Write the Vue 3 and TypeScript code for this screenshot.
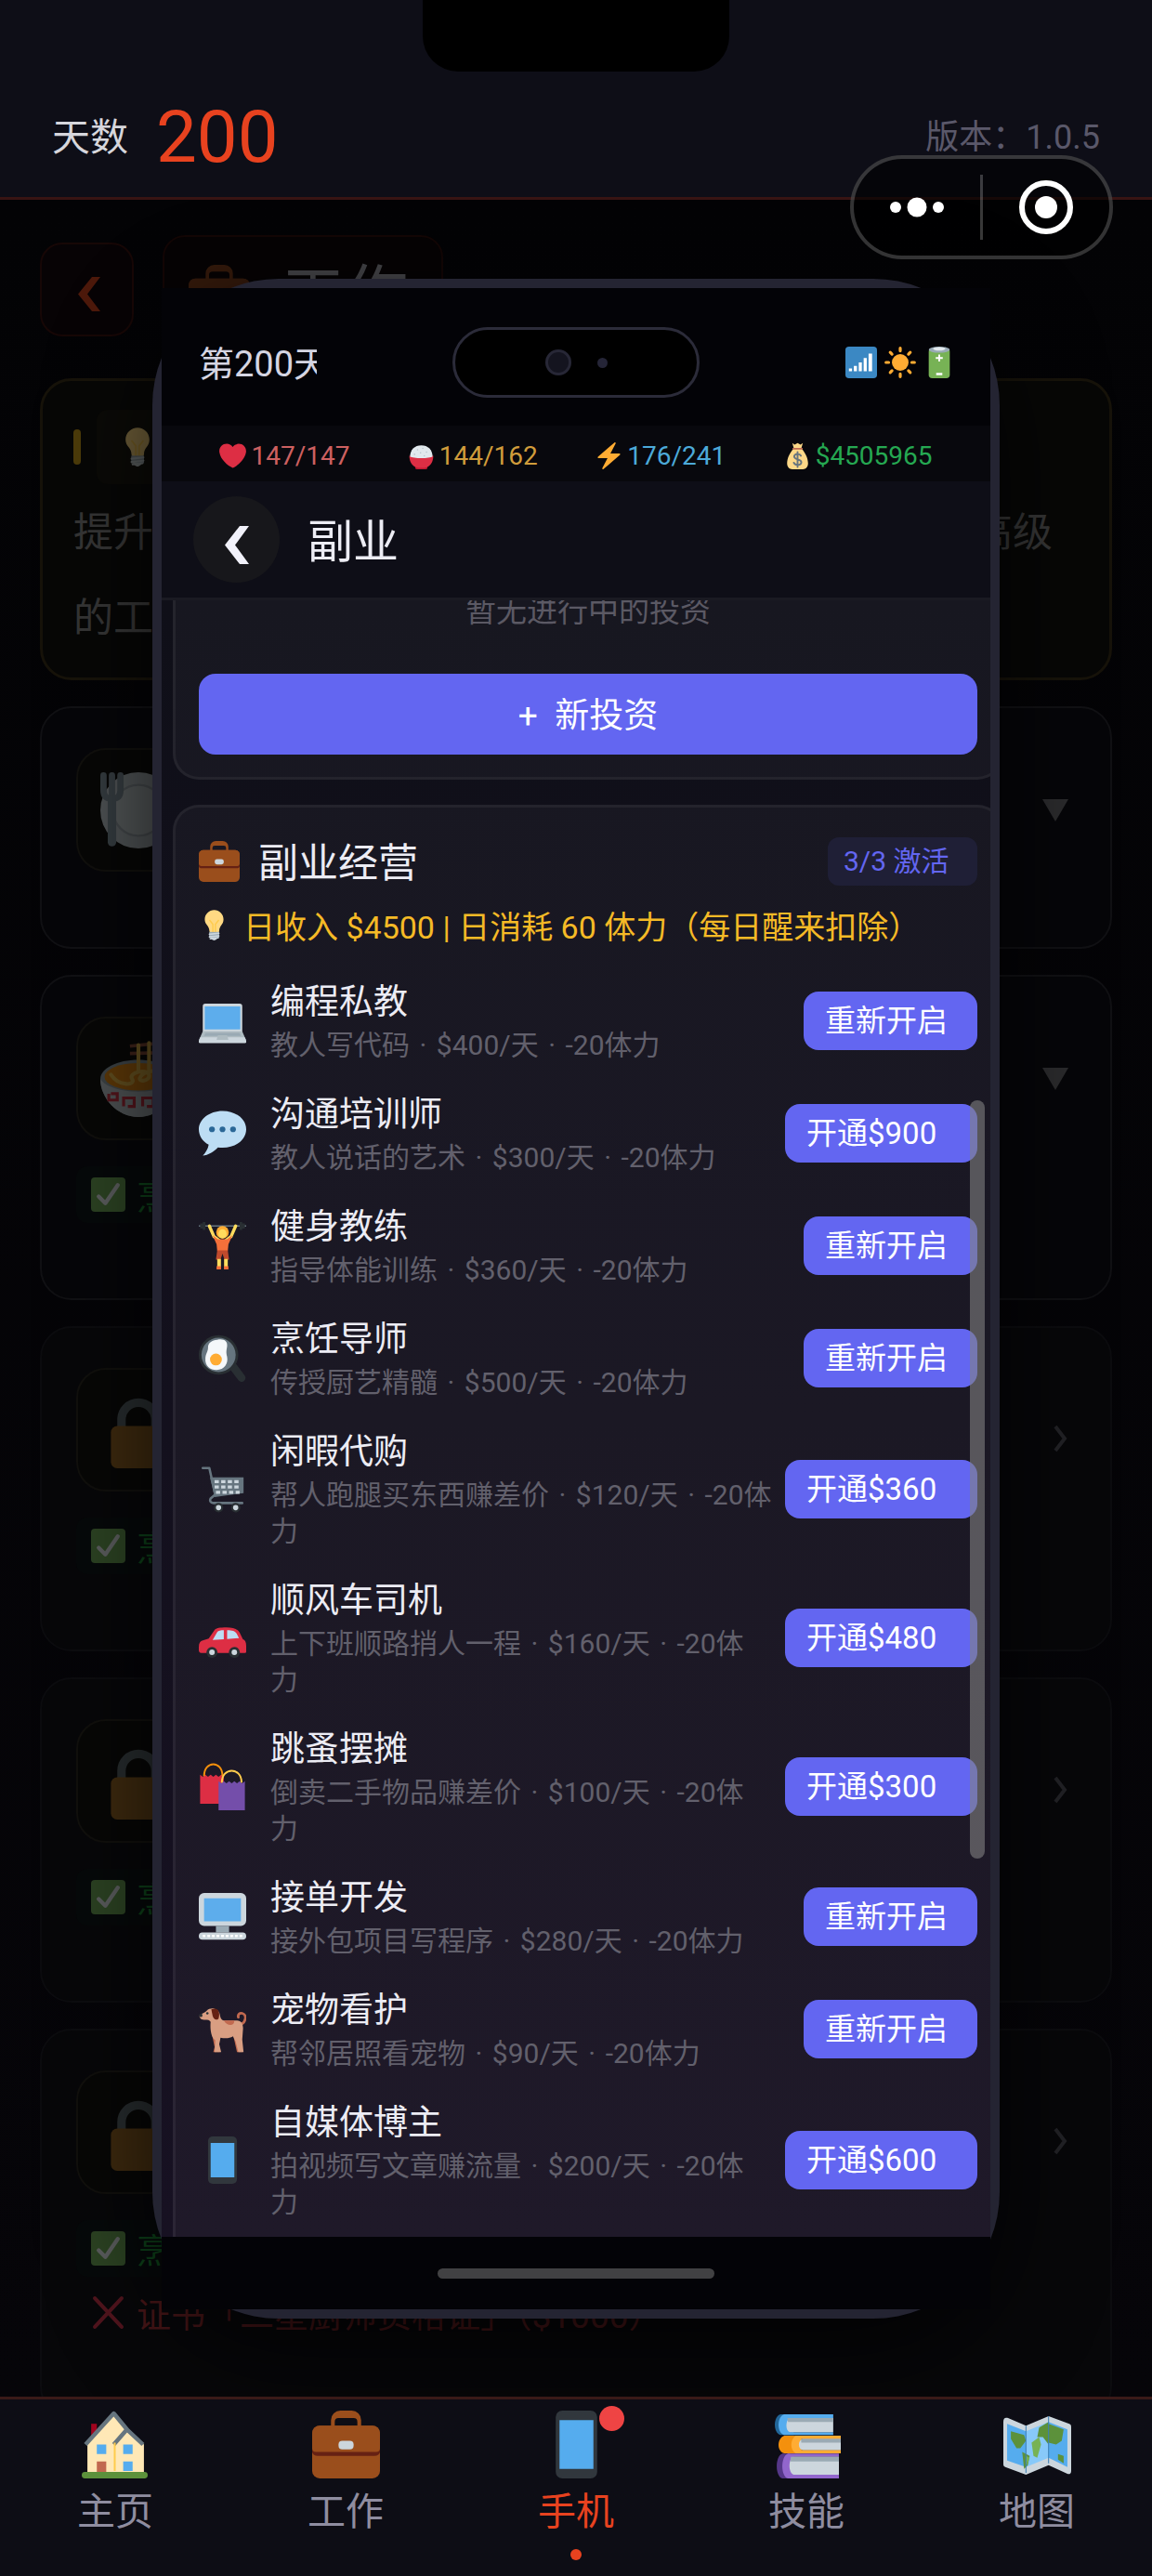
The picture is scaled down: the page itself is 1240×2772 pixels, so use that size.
<script setup lang="ts">
import { ref } from 'vue'

interface Gig {
  icon: string
  name: string
  desc: string[]
  action: string
  price?: boolean
}
interface Requirement {
  met: boolean
  text: string
}
interface Job {
  icon: string
  locked: boolean
  requirements: Requirement[]
}

const gigs: Gig[] = [
  { icon: 'laptop', name: '编程私教', desc: ['教人写代码', '$400/天', '-20体力'], action: '重新开启' },
  { icon: 'speech', name: '沟通培训师', desc: ['教人说话的艺术', '$300/天', '-20体力'], action: '开通$900', price: true },
  { icon: 'lifter', name: '健身教练', desc: ['指导体能训练', '$360/天', '-20体力'], action: '重新开启' },
  { icon: 'pan', name: '烹饪导师', desc: ['传授厨艺精髓', '$500/天', '-20体力'], action: '重新开启' },
  { icon: 'cart', name: '闲暇代购', desc: ['帮人跑腿买东西赚差价', '$120/天', '-20体\n力'], action: '开通$360', price: true },
  { icon: 'car', name: '顺风车司机', desc: ['上下班顺路捎人一程', '$160/天', '-20体\n力'], action: '开通$480', price: true },
  { icon: 'bags', name: '跳蚤摆摊', desc: ['倒卖二手物品赚差价', '$100/天', '-20体\n力'], action: '开通$300', price: true },
  { icon: 'desktop', name: '接单开发', desc: ['接外包项目写程序', '$280/天', '-20体力'], action: '重新开启' },
  { icon: 'dog', name: '宠物看护', desc: ['帮邻居照看宠物', '$90/天', '-20体力'], action: '重新开启' },
  { icon: 'mobile', name: '自媒体博主', desc: ['拍视频写文章赚流量', '$200/天', '-20体\n力'], action: '开通$600', price: true },
]
const separator = ' \u200A·\u200A '

const cooking: Requirement = { met: true, text: '烹饪' }
const jobs: Job[] = [
  { icon: 'plate', locked: false, requirements: [] },
  { icon: 'noodles', locked: false, requirements: [cooking] },
  { icon: 'lock', locked: true, requirements: [cooking] },
  { icon: 'lock', locked: true, requirements: [cooking] },
  { icon: 'lock', locked: true, requirements: [cooking, { met: false, text: '证书「二星厨师资格证」（$1000）' }] },
]

const stats = [
  { icon: 'heart', value: '147/147', tone: 'red' },
  { icon: 'rice', value: '144/162', tone: 'amber' },
  { icon: 'bolt', value: '176/241', tone: 'blue' },
  { icon: 'money', value: '$4505965', tone: 'green' },
]

const tabs = [
  { id: 'home', icon: 'house', label: '主页' },
  { id: 'work', icon: 'briefcase', label: '工作' },
  { id: 'phone', icon: 'mobile', label: '手机' },
  { id: 'skill', icon: 'books', label: '技能' },
  { id: 'map', icon: 'map', label: '地图' },
]
const current = ref('phone')

/* Colour pictograms, each on a 36 x 36 grid. */
const icons: Record<string, string> = {
  briefcase:
    '<path fill="#9A4E1C" d="M15 0h6a5 5 0 0 1 5 5v4h-2V6a2 2 0 0 0-2-2h-8a2 2 0 0 0-2 2v3h-2V5a5 5 0 0 1 5-5z"/><rect y="8" width="36" height="28" rx="4" fill="#9A4E1C"/><path fill="#662113" d="M0 19v3a3 2 0 0 0 3 2h30a3 2 0 0 0 3-2v-3z"/><path fill="#9A4E1C" d="M4 8h28a4 4 0 0 1 4 4v8a2 2 0 0 1-2 2H2a2 2 0 0 1-2-2v-8a4 4 0 0 1 4-4z"/><rect x="14" y="16" width="8" height="4.6" rx="2" fill="#CCD6DD"/>',
  bulb:
    '<path fill="#FFD983" d="M29 11.06c0 6.44-5 7.44-5 13.44 0 3.1-3.36 3.5-5.5 3.5-2.05 0-6.1-.02-6.1-3.5 0-6-5.4-7-5.4-13.44C7 5.03 12.1.14 18.08.14S29 5.03 29 11.06z"/><path fill="none" stroke="#FFCC4D" stroke-width="1.6" d="M16.5 27v-10l-4-5M19.5 27v-10l4-5"/><path fill="#CCD6DD" d="M22.2 32.5c0 .83-2.24 3.5-4.2 3.5s-4.2-2.67-4.2-3.5c0-.83 2.24-.5 4.2-.5s4.2-.33 4.2.5z"/><path fill="#99AAB5" d="M12.2 26h11.8v7h-11.8z"/><path stroke="#CCD6DD" stroke-width="1.8" stroke-linecap="round" d="M12.5 28.8l11-1.2M12.5 31.8l11-1.2M13.5 34l9-1"/>',
  heart:
    '<path fill="#DD2E44" d="M35.885 11.833c0-5.45-4.418-9.868-9.867-9.868-3.308 0-6.227 1.633-8.018 4.129-1.791-2.496-4.71-4.129-8.017-4.129-5.45 0-9.868 4.417-9.868 9.868 0 .772.098 1.52.266 2.241C1.751 22.587 11.216 31.568 18 34.034c6.783-2.466 16.249-11.447 17.617-19.959.17-.721.268-1.469.268-2.242z"/>',
  rice:
    '<path fill="#BE1931" d="M10 32h16v2a2 2 0 0 1-2 2H12a2 2 0 0 1-2-2z"/><path fill="#DD2E44" d="M2 18h32c0 9-5 15.5-12 16h-8C7 33.500 2 27 2 18z"/><path fill="#E1E8ED" d="M3 19C3 10 9 4 18 4s15 6 15 15c-4 3-26 3-30 0z"/><g fill="#B9C5CE"><circle cx="13" cy="10" r="1"/><circle cx="20" cy="8" r="1"/><circle cx="25" cy="13" r="1"/><circle cx="17" cy="14" r="1"/><circle cx="9" cy="16" r="1"/><circle cx="22" cy="18" r="1"/></g>',
  bolt:
    '<path fill="#FFAC33" d="M32.938 15.651C32.792 15.26 32.418 15 32 15H19.925L26.89 1.458c.219-.426.106-.947-.271-1.243C26.437.071 26.218 0 26 0c-.233 0-.466.082-.653.243L18 6.588 3.347 19.243c-.316.273-.43.714-.284 1.105S3.582 21 4 21h12.075L9.11 34.542c-.219.426-.106.947.271 1.243.182.144.401.215.619.215.233 0 .466-.082.653-.243L18 29.412l14.653-12.655c.317-.273.43-.714.285-1.106z"/>',
  money:
    '<path fill="#FDD888" d="M11 1l3 2 4-2 4 2 3-2-2 7c5 5 9 13 9 20 0 5-3 8-7 8H11c-4 0-7-3-7-8 0-7 4-15 9-20z"/><path fill="none" stroke="#BF6952" stroke-width="2" stroke-linecap="round" d="M12 8.500h12"/><path fill="none" stroke="#67757F" stroke-width="2.400" stroke-linecap="round" d="M22.500 18c-1-2-2.500-2.500-4.500-2.500-2.500 0-4.500 1.300-4.500 3.500 0 5 9.500 2.500 9.500 7.500 0 2.300-2 3.700-5 3.700-2.300 0-4.200-1-5-3M18 13v20"/>',
  signal:
    '<rect width="36" height="36" rx="4" fill="#3B88C3"/><path fill="#fff" d="M4 25h3.500v3H4zM9.600 22h3.500v6H9.600zM15.200 18h3.500v10h-3.500zM20.800 13h3.500v15h-3.500zM26.400 8h4v20h-4z"/>',
  sun:
    '<circle cx="18" cy="18" r="9.500" fill="#FFAC33"/><path stroke="#FFAC33" stroke-width="3.400" stroke-linecap="round" d="M18 1.800v3M18 31.200v3M1.800 18h3M31.200 18h3M6.600 6.600l2 2M27.400 27.400l2 2M6.600 29.400l2-2M27.400 8.600l2-2"/>',
  battery:
    '<rect x="6" y="2" width="24" height="34" rx="4" fill="#77B255"/><ellipse cx="18" cy="3.500" rx="12" ry="3.500" fill="#99AAB5"/><ellipse cx="18" cy="2.500" rx="7" ry="2" fill="#E1E8ED"/><path fill="#fff" d="M17 9h2v3h3v2h-3v3h-2v-3h-3v-2h3zM14.500 30h7v2.500h-7z"/>',
  laptop:
    '<path fill="#CCD6DD" d="M5 5h26a2 2 0 0 1 2 2v20H3V7a2 2 0 0 1 2-2z"/><path fill="#5DADEC" d="M4.500 7h27v17.500h-27z"/><path fill="#AEBBC1" d="M3 26h30l3 7H0z"/><path fill="#CCD6DD" d="M0 33l1-2.500h34l1 2.500v1a1 1 0 0 1-1 1H1a1 1 0 0 1-1-1z"/><path fill="#9AAAB4" d="M5 27.200h26l1 2.200H4z"/><path fill="#AEBBC1" d="M14.500 29h7l1 3.500h-9z"/>',
  speech:
    '<path fill="#BDDDF4" d="M18 1C8 1 0 7.300 0 15c0 5 3 9.300 7.500 11.700C7 30 5 33 3 35c4-.5 8.500-3 11.500-6.300 1.200.2 2.300.3 3.500.3 10 0 18-6 18-14S28 1 18 1z"/><circle cx="10" cy="15" r="2.200" fill="#2A6797"/><circle cx="18" cy="15" r="2.200" fill="#2A6797"/><circle cx="26" cy="15" r="2.200" fill="#2A6797"/>',
  lifter:
    '<path stroke="#66757F" stroke-width="1" d="M0 3h36"/><path fill="#292F33" d="M1 1h2V0h2v6H3V5H1zM35 1h-2V0h-2v6h2V5h2z"/><path fill="none" stroke="#FFDC5D" stroke-width="2.400" stroke-linecap="round" stroke-linejoin="round" d="M8 3l3.500 8 4 3M28 3l-3.500 8-4 3"/><circle cx="18" cy="7.800" r="4.800" fill="#FFAC33"/><ellipse cx="18" cy="9" rx="3.200" ry="3.600" fill="#FFDC5D"/><path fill="#F4703A" d="M10.500 10l4 3h7l4-3-3 7-.5 5h-8l-.5-5z"/><path fill="#BF4A2D" d="M14 21.500h8l1 7h-3.500L18 24l-1.500 4.500H13z"/><path fill="#FFDC5D" d="M14 28h2.800v6H14zM19.200 28H22v6h-2.800z"/><path fill="#F4703A" d="M13.500 33.500h3.400V36h-3.400zM19.100 33.500h3.400V36h-3.400z"/>',
  pan:
    '<path stroke="#292F33" stroke-width="6" stroke-linecap="round" d="M25 23l7.500 10"/><circle cx="15" cy="15.500" r="15" fill="#292F33"/><circle cx="15" cy="15.500" r="13" fill="#66757F"/><path fill="#F5F8FA" d="M14 4c5-1 8 1 7.500 5-.4 3-1 4 0 8 1 5-2 10-8 10-5 0-9-3-8.500-9 .3-4 2-5 2-8 0-4 3-5.500 7-6z"/><circle cx="13" cy="19" r="4.500" fill="#FFAC33"/>',
  cart:
    '<path fill="none" stroke="#66757F" stroke-width="1.800" stroke-linecap="round" stroke-linejoin="round" d="M3 2h5l4.500 20L9 25c-1 2 0 3.500 2 3.500h22"/><path fill="#66757F" d="M8.500 9H34v12l-22 3z"/><path stroke="#CCD6DD" stroke-width="2.300" stroke-dasharray="3.200 1.800" d="M12 12.300h19.500M12 16.300h19.500M13 20.300h18"/><circle cx="15" cy="32" r="2.800" fill="#CCD6DD" stroke="#292F33" stroke-width="1.600"/><circle cx="28" cy="32" r="2.800" fill="#CCD6DD" stroke="#292F33" stroke-width="1.600"/>',
  car:
    '<path fill="#DD2E44" d="M12 12c1-1.500 4-2 9-2s8 .8 10 4l2.500 5c1.600.6 2.500 2 2.500 5v4.500a1 1 0 0 1-1 1H2C.500 29.500 0 28.500 0 27v-2c0-3 1-4.500 3-5l4.500-1.500z"/><path fill="#BDDDF4" d="M14 13.500c.8-1 2.500-1.300 5-1.300V19l-8.500.5zM21.500 12.200c4 0 6 .6 7.300 2.600l1.700 3.400-9 .6z"/><circle cx="10" cy="29" r="4.200" fill="#292F33"/><circle cx="27" cy="29" r="4.200" fill="#292F33"/><circle cx="10" cy="29" r="2.100" fill="#CCD6DD"/><circle cx="27" cy="29" r="2.100" fill="#CCD6DD"/>',
  bags:
    '<path fill="#DD2E44" d="M1 9l2 1.500L5 9l2 1.500L9 9l2 1.500L13 9l2 1.500L17 9l2 1.500V31H1z"/><path fill="none" stroke="#F4900C" stroke-width="1.400" d="M4 10c0-12 14-12 14 0"/><path fill="#744EAA" d="M15 14l2 1.500 2-1.500 2 1.500 2-1.500 2 1.500 2-1.500 2 1.500 2-1.500 2 1.500 2-1.500v22H15z"/><path fill="none" stroke="#FFCC4D" stroke-width="1.400" d="M17.500 15c0-12 15-12 15 0"/>',
  desktop:
    '<rect width="36" height="25" rx="4" fill="#CCD6DD"/><path fill="#5DADEC" d="M4 4h28v17.500H4z"/><path fill="#9AAAB4" d="M13 25h10v5H13z"/><rect y="30" width="36" height="5.500" rx="2.700" fill="#CCD6DD"/><path stroke="#fff" stroke-width="1.800" stroke-dasharray="2 1.500" d="M3 32.700h30"/>',
  dog:
    '<path fill="none" stroke="#C1694F" stroke-width="2" stroke-linecap="round" d="M30 15c6-1 7-8 3-9-2-.5-3.500 1-3 3"/><path fill="#C1694F" d="M10 22l6 2-1 9 1 2.500h-5l1-4zM26 22l5 1 2 10v2.500h-4z"/><path fill="#D99E82" d="M6 4c3-3 9-2 10 3 .5 3 1.500 4.500 4 4.500h9c4 0 5 4 4.500 7.500L33 26l1 9.500h-4l-2-8-2-4c-3 2-7 1.500-9.500 1l-1 5 1.500 6h-5l.5-9C9 24 8.500 17 9 12.500c-1-1.500-2-1.500-4-1.500-3 0-4.500-1-4.500-3C1 6.500 4 6 6 4z"/><path fill="#662113" d="M9.500 3c5-2 7 2 5.500 7-2 2-4 0-4.500-2z"/><path fill="#C1694F" d="M19 11.500h8c0 5-6 4-8 0z"/><circle cx="6.500" cy="6" r=".9" fill="#292F33"/><circle cx="1.500" cy="7.500" r="1.300" fill="#292F33"/>',
  mobile:
    '<rect x="7" width="22" height="36" rx="3.500" fill="#31373D"/><path fill="#55ACEE" d="M9 5h18v26H9z"/>',
  plate:
    '<circle cx="18" cy="18" r="18" fill="#CCD6DD"/><circle cx="18" cy="18" r="12" fill="#D5DEE4" stroke="#AAB6BF"/><path fill="none" stroke="#8899A6" stroke-width="3" stroke-linecap="round" stroke-linejoin="round" d="M1.500 1.500v7c0 3 1.500 4 4 4s4-1 4-4v-7M5.500 1.500V12"/><path stroke="#8899A6" stroke-width="4" stroke-linecap="round" d="M5.500 13v20"/>',
  noodles:
    '<path stroke="#A0563F" stroke-width="1.600" d="M14 2.500l20-2M14 6l20-.5"/><path fill="#99AAB5" d="M0 18C0 13 8 9 18 9s18 4 18 9c0 9-8 18-18 18S0 27 0 18z"/><path fill="#CCD6DD" d="M0 18c5 8 31 8 36 0 0 9-8 18-18 18S0 27 0 18z"/><ellipse cx="18" cy="17" rx="16" ry="6.500" fill="#F4900C"/><path fill="none" stroke="#FFCC4D" stroke-width="1.800" stroke-linecap="round" d="M18 2v12M23 1v13M5 16c4 6 12 5 10 2s7-5 8-2-6 4-4 1 9-4 12-1"/><path fill="none" stroke="#DD2E44" stroke-width="1.400" d="M4 25v3h4v-3H5M11 31v-4h5v4h-3M20 31v-4h5v4h-3M29 28v-3h4"/>',
  lock:
    '<path fill="none" stroke="#8899A6" stroke-width="4" d="M10 18v-5a8 8 0 0 1 16 0v5"/><rect x="5" y="16" width="26" height="20" rx="3" fill="#E2912A"/>',
  check:
    '<rect width="36" height="36" rx="4" fill="#77B255"/><path fill="none" stroke="#fff" stroke-width="4.200" stroke-linecap="round" stroke-linejoin="round" d="M8 20l7 7L28 8"/>',
  cross:
    '<path fill="none" stroke="#DD2E44" stroke-width="4" stroke-linecap="round" d="M4 3l28 30M32 3L4 33"/>',
  house:
    '<path fill="#A0041E" d="M5 7h3v9H5z"/><path fill="#FFE8B6" d="M3 17L17 1l8 9 8 8v15H3z"/><path fill="none" stroke="#66757F" stroke-width="2.200" stroke-linejoin="round" d="M2 18L17 1.500l7 8.500-7 8M24 10l8.500 8"/><path fill="#FFCC4D" d="M17 17h1v15h-1z"/><path fill="#55ACEE" d="M8 18h5v5H8zM22 18h5v5h-5zM22 27h5v5h-5z"/><path fill="#C1694F" d="M8 27h5v6H8z"/><rect y="32.500" width="35" height="3.500" rx="1.700" fill="#5C913B"/>',
  books:
    '<path fill="#226699" d="M4 2h7v11H4C0 12 0 3 4 2z"/><path fill="#55ACEE" d="M6 2h26v2H9v7.500h23V13H6C2 12 2 3 6 2z"/><path fill="#CCD6DD" d="M9 4h23v7.500H9C6.500 11 6.500 5 9 4z"/><path fill="#9AAAB4" d="M7.600 4H32v2H8z"/><path fill="#F4900C" d="M6 13.300h30v1.700H15v6h21v1.700H6c-4-1-4-8 0-9.400z"/><path fill="#FFAC33" d="M12 13.300h24V15H15v6h21v1.700H12c-3-2-3-7 0-9.400z"/><path fill="#CCD6DD" d="M16 15h20v6H16c-3-.5-3-5.500 0-6z"/><path fill="#9AAAB4" d="M15 15h21v2H15z"/><path fill="#553788" d="M5 22.800h4V36H5c-4-1-4-12 0-13.200z"/><path fill="#9266CC" d="M8 22.800h27v1.700H11V34h24v2H8c-4-1-4-12 0-13.200z"/><path fill="#CCD6DD" d="M11 24.500h24V34H11c-3-1-3-8.500 0-9.500z"/><path fill="#9AAAB4" d="M9.500 24.500H35V27H9.200z"/>',
  map:
    '<path fill="#CCD6DD" d="M0 6c0-2 1-2.500 2.500-2L12 8l12-5 11 4c1 .4 1 1 1 2v23c0 1.500-1 2-2 1.500L24 29l-12 5-11-4c-1-.5-1-1-1-2z"/><path fill="#55ACEE" d="M2 7l10 4v19L2 26.500z"/><path fill="#88C9F9" d="M12 11l12-5v19l-12 5z"/><path fill="#55ACEE" d="M24 6l10 4v20l-10-5z"/><path fill="#5C913B" d="M4 11l7 2 1 3-3 4-2 0-3-5zM10 22l4 2-1 5-2 2zM19 9l5-3v12l-3-4-3 0zM24 7l8 3-1 6-3 2-4-1zM29 23l3 1v4l-3-2z"/><path fill="#77B255" d="M15 17l4-3 1 4-2 7-2-1zM12 24l2 1-2 5z"/><path stroke="#3B7FB5" stroke-width=".5" d="M12 8v25M24 3v25"/>',
}
</script>

<template>
  <div class="app">
    <header class="topbar">
      <div class="notch"></div>
      <div class="days"><span>天数</span><strong>200</strong></div>
      <div class="version">版本：1.0.5</div>
      <div class="capsule">
        <button type="button" aria-label="更多">
          <svg width="60" height="24" viewBox="0 0 60 24" fill="#fff"><circle cx="7" cy="12" r="6" /><circle cx="30" cy="12" r="10.500" /><circle cx="53" cy="12" r="6" /></svg>
        </button>
        <i></i>
        <button type="button" aria-label="关闭">
          <svg width="60" height="60" viewBox="0 0 60 60"><circle cx="30" cy="30" r="26" fill="none" stroke="#fff" stroke-width="6" /><circle cx="30" cy="30" r="12" fill="#fff" /></svg>
        </button>
      </div>
    </header>

    <main class="stage">
      <section class="page">
        <div class="page-head">
          <button type="button" class="page-back" aria-label="返回">
            <svg width="24" height="37" viewBox="0 0 24 37"><path fill="#4d190b" d="M15 0h9L10 18.500 24 37h-9L0 18.500z" /></svg>
          </button>
          <h1 class="page-title"><svg class="dim-title" width="66" height="66" viewBox="0 0 36 36" v-html="icons.briefcase"></svg>工作</h1>
        </div>

        <article class="tip">
          <div class="tip-head"><i></i><span><svg width="42" height="42" viewBox="0 0 36 36" v-html="icons.bulb"></svg></span></div>
          <p><span>提升</span><span>高级</span></p>
          <p>的工</p>
        </article>

        <article v-for="(job, n) in jobs" :key="n" class="job" :class="{ locked: job.locked }">
          <div class="job-row">
            <span class="job-icon"><svg width="82" height="82" viewBox="0 0 36 36" v-html="icons[job.icon]"></svg></span>
            <svg v-if="job.locked" class="go" width="16" height="30" viewBox="0 0 16 30"><path fill="none" stroke="#222226" stroke-width="4" d="M2 2l10 13L2 28" /></svg>
            <svg v-else width="28" height="24" viewBox="0 0 28 24"><path fill="#2b2b2d" d="M0 0h28L14 24z" /></svg>
          </div>
          <ul v-if="job.requirements.length" class="reqs">
            <li v-for="r in job.requirements" :key="r.text" :class="{ missing: !r.met }">
              <svg width="37" height="37" viewBox="0 0 36 36" v-html="icons[r.met ? 'check' : 'cross']"></svg>{{ r.text }}
            </li>
          </ul>
        </article>
      </section>

      <div class="overlay">
        <section class="phone">
          <div class="screen">
            <div class="status">
              <span class="status-day">第200天</span>
              <span class="island"><i class="lens"></i><i class="sensor"></i></span>
              <span class="status-icons">
                <svg v-for="s in ['signal', 'sun', 'battery']" :key="s" width="34" height="34" viewBox="0 0 36 36" v-html="icons[s]"></svg>
              </span>
            </div>
            <div class="stats">
              <span v-for="s in stats" :key="s.icon" :class="s.tone">
                <svg width="29" height="29" viewBox="0 0 36 36" v-html="icons[s.icon]"></svg>{{ s.value }}
              </span>
            </div>
            <div class="bar">
              <button type="button" aria-label="返回">
                <svg width="26" height="41" viewBox="0 0 26 41"><path fill="#f1f1fa" d="M16 0h10L11 20.500 26 41H16L0 20.500z" /></svg>
              </button>
              <h2>副业</h2>
            </div>
            <div class="scroller">
              <section class="card invest">
                <p>暂无进行中的投资</p>
                <button type="button">+&nbsp; 新投资</button>
              </section>
              <section class="card">
                <div class="card-head">
                  <svg width="44" height="44" viewBox="0 0 36 36" v-html="icons.briefcase"></svg>
                  <h3>副业经营</h3>
                  <span class="badge">3/3 激活</span>
                </div>
                <p class="income">
                  <svg width="33" height="33" viewBox="0 0 36 36" v-html="icons.bulb"></svg>日收入 $4500 | 日消耗 60 体力（每日醒来扣除）
                </p>
                <ul class="gigs">
                  <li v-for="g in gigs" :key="g.name">
                    <svg width="51" height="51" viewBox="0 0 36 36" v-html="icons[g.icon]"></svg>
                    <div class="gig-text">
                      <h4>{{ g.name }}</h4>
                      <p>{{ g.desc.join(separator) }}</p>
                    </div>
                    <button type="button" :class="{ price: g.price }">{{ g.action }}</button>
                  </li>
                </ul>
              </section>
              <div class="thumb"></div>
            </div>
            <div class="home"><i></i></div>
          </div>
        </section>
      </div>
    </main>

    <nav class="tabs">
      <button v-for="t in tabs" :key="t.id" type="button" :class="{ active: current === t.id }" @click="current = t.id">
        <span class="tab-icon">
          <svg width="73" height="73" viewBox="0 0 36 36" v-html="icons[t.icon]"></svg>
          <i v-if="t.id === 'phone'" class="alert"></i>
        </span>
        <span>{{ t.label }}</span>
        <i v-if="current === t.id" class="dot"></i>
      </button>
    </nav>
  </div>
</template>

<style>
body {
  background: #040406;
}
</style>

<style scoped>
* {
  box-sizing: border-box;
  margin: 0;
  padding: 0;
}
.app {
  display: flex;
  flex-direction: column;
  height: 100vh;
  overflow: hidden;
  color: #ececf4;
  font-family: Roboto, "Noto Sans CJK SC", sans-serif;
}
button {
  border: 0;
  background: none;
  color: inherit;
  font: inherit;
}
ul {
  list-style: none;
}
svg {
  display: block;
  flex: none;
}

.topbar {
  position: relative;
  z-index: 3;
  flex: none;
  display: flex;
  align-items: center;
  justify-content: space-between;
  padding: 76px 56px 0;
  height: 215px;
  background: #0e0e17;
  border-bottom: 3px solid #381413;
}
.notch {
  position: absolute;
  top: 0;
  left: 50%;
  width: 330px;
  height: 77px;
  margin-left: -165px;
  background: #000;
  border-radius: 0 0 38px 38px;
}
.days {
  display: flex;
  align-items: center;
  gap: 30px;
  font-size: 41px;
  color: #d6d6dc;
}
.days strong {
  padding-top: 8px;
  font-size: 78px;
  line-height: 80px;
  font-weight: 400;
  color: #e8421f;
}
.version {
  font-size: 36px;
  color: #5a586a;
}
.capsule {
  position: absolute;
  top: 167px;
  right: 42px;
  display: flex;
  align-items: center;
  width: 283px;
  height: 112px;
  background: rgba(0, 0, 0, 0.6);
  border: 4px solid rgba(255, 255, 255, 0.2);
  border-radius: 56px;
}
.capsule button {
  flex: 1;
  display: flex;
  justify-content: center;
}
.capsule i {
  width: 3px;
  height: 70px;
  background: rgba(255, 255, 255, 0.22);
}

.stage {
  position: relative;
  flex: 1;
  min-height: 0;
  overflow: hidden;
  background: linear-gradient(#030305, #060509);
}
.page {
  display: flex;
  flex-direction: column;
  gap: 28px;
  padding: 38px 43px 0;
}
.page-head {
  display: flex;
  align-items: center;
  gap: 31px;
  height: 116px;
  margin-bottom: 10px;
}
.page-back {
  display: grid;
  place-items: center;
  width: 101px;
  height: 101px;
  padding: 10px 0 0 4px;
  background: #070305;
  border: 2px solid #170706;
  border-radius: 24px;
}
.page-title {
  display: flex;
  align-items: center;
  gap: 34px;
  height: 116px;
  padding: 14px 36px 0 26px;
  background: #060304;
  border: 2px solid #130605;
  border-radius: 24px;
  font-size: 68px;
  line-height: 100px;
  font-weight: 400;
  color: #454549;
}
.dim-title {
  opacity: 0.3;
}
.tip {
  flex: none;
  height: 325px;
  padding: 31px 61px 0 33px;
  background: #070706;
  border: 3px solid #17130a;
  border-radius: 34px;
  font-size: 43px;
  line-height: 92px;
  color: #363636;
}
.tip-head {
  display: flex;
  align-items: center;
  gap: 17px;
  height: 80px;
  margin-bottom: 6px;
}
.tip-head i {
  width: 8px;
  height: 38px;
  border-radius: 4px;
  background: #4d3c0a;
}
.tip-head span {
  width: 240px;
  padding: 19px 23px;
  background: #0b0a07;
  border-radius: 12px;
}
.tip-head svg {
  opacity: 0.4;
}
.tip p {
  display: flex;
  justify-content: space-between;
}
.job {
  flex: none;
  padding: 43px 45px 81px 37px;
  background: #060609;
  border: 2px solid #111114;
  border-radius: 34px;
}
.job.locked {
  background: #070709;
  border-color: #0c0c0f;
}
.job-row {
  display: flex;
  align-items: center;
  justify-content: space-between;
}
.go {
  margin-top: 18px;
}
.job-icon {
  display: grid;
  place-items: center;
  width: 133px;
  height: 133px;
  background: #070706;
  border: 2px solid #11100d;
  border-radius: 32px;
}
.job-icon svg {
  opacity: 0.36;
}
.locked .job-icon svg {
  opacity: 0.25;
}
.reqs {
  display: flex;
  flex-direction: column;
  align-items: flex-start;
  gap: 8px;
  margin-top: 28px;
}
.reqs li {
  display: flex;
  align-items: center;
  gap: 12px;
  height: 61px;
  padding: 0 16px;
  background: #06090a;
  border-radius: 12px;
  font-size: 37px;
  color: #0d4019;
}
.reqs li.missing {
  background: none;
  color: #451517;
}
.reqs svg {
  opacity: 0.34;
}

.overlay {
  position: absolute;
  inset: 0;
  padding: 85px 164px 84px;
}
.phone {
  height: 100%;
  padding: 10px;
  background: #242432;
  border-radius: 136px;
  box-shadow: 0 30px 110px rgba(0, 0, 0, 0.7);
}
.screen {
  display: flex;
  flex-direction: column;
  height: 100%;
  background: #030307;
}
.status {
  position: relative;
  flex: none;
  display: flex;
  align-items: center;
  justify-content: space-between;
  height: 148px;
  padding: 12px 38px 0 40px;
}
.status-day {
  width: 127px;
  margin-bottom: 4px;
  overflow: hidden;
  white-space: nowrap;
  font-size: 38px;
  color: #d5d5e2;
}
.island {
  position: absolute;
  top: 42px;
  left: 50%;
  display: flex;
  align-items: center;
  justify-content: center;
  gap: 28px;
  width: 266px;
  height: 76px;
  margin-left: -133px;
  background: #000;
  border: 3px solid #2b2b39;
  border-radius: 38px;
}
.lens {
  width: 28px;
  height: 28px;
  background: #14141f;
  border: 3px solid #272736;
  border-radius: 50%;
}
.sensor {
  width: 11px;
  height: 11px;
  background: #252537;
  border-radius: 50%;
}
.status-icons {
  display: flex;
  gap: 8px;
}
.stats {
  flex: none;
  display: flex;
  align-items: center;
  justify-content: space-evenly;
  height: 60px;
  padding-top: 4px;
  background: #08080d;
  font-size: 28px;
}
.stats span {
  display: flex;
  align-items: center;
  gap: 5px;
}
.red {
  color: #cd6060;
}
.amber {
  color: #d09c3b;
}
.blue {
  color: #4caad9;
}
.green {
  color: #25a852;
}
.bar {
  flex: none;
  display: flex;
  align-items: center;
  gap: 30px;
  height: 128px;
  padding-left: 34px;
  background: #0e0e17;
  border-bottom: 3px solid #1a1a22;
}
.bar button {
  display: grid;
  place-items: center;
  width: 93px;
  height: 93px;
  padding-top: 12px;
  background: #17171b;
  border-radius: 50%;
}
.bar h2 {
  margin-bottom: 4px;
  font-size: 49px;
  font-weight: 400;
}
.scroller {
  position: relative;
  flex: 1;
  min-height: 0;
  overflow: hidden;
  padding-left: 12px;
  background: linear-gradient(#0f0f18, #171122);
}
.card {
  margin-right: -14px;
  padding: 32px 25px;
  background: rgba(255, 255, 255, 0.035);
  border: 3px solid rgba(255, 255, 255, 0.055);
  border-radius: 28px;
}
.card + .card {
  margin-top: 27px;
}
.invest {
  padding-top: 0;
  padding-bottom: 24px;
  border-top: 0;
  border-radius: 0 0 28px 28px;
}
.invest p {
  height: 79px;
  font-size: 33px;
  line-height: 24px;
  text-align: center;
  color: #5b5964;
}
.invest button {
  width: 100%;
  height: 87px;
  padding-bottom: 4px;
  background: #6366f1;
  border-radius: 18px;
  font-size: 37px;
  color: #fff;
}
.card-head {
  display: flex;
  align-items: center;
  height: 52px;
}
.card-head h3 {
  margin: 0 auto 4px 20px;
  font-size: 43px;
  font-weight: 400;
}
.badge {
  width: 161px;
  height: 52px;
  padding-left: 17px;
  background: #1f1f36;
  border-radius: 12px;
  font-size: 30px;
  line-height: 52px;
  color: #6366f1;
}
.income {
  display: flex;
  align-items: center;
  gap: 15px;
  height: 85px;
  font-size: 34px;
  white-space: nowrap;
  color: #f5ba26;
}
.gigs li {
  display: flex;
  align-items: center;
  padding: 15px 0;
}
.gig-text {
  flex: 1;
  margin-left: 26px;
  white-space: pre;
}
.gig-text h4 {
  font-size: 37px;
  line-height: 52px;
  font-weight: 400;
}
.gig-text p {
  font-size: 30px;
  line-height: 39px;
  color: #62606c;
}
.gigs button {
  flex: none;
  width: 187px;
  height: 63px;
  padding-left: 23px;
  background: #6366f1;
  border-radius: 16px;
  font-size: 33px;
  line-height: 63px;
  text-align: left;
  color: #fff;
}
.gigs button.price {
  width: 207px;
}
.thumb {
  position: absolute;
  top: 538px;
  right: 6px;
  width: 16px;
  height: 816px;
  background: rgba(131, 131, 131, 0.59);
  border-radius: 8px;
}
.home {
  flex: none;
  display: grid;
  place-items: center;
  height: 78px;
}
.home i {
  width: 298px;
  height: 11px;
  background: #414143;
  border-radius: 6px;
}

.tabs {
  position: relative;
  z-index: 2;
  flex: none;
  display: flex;
  height: 193px;
  background: #0d0d15;
  border-top: 3px solid #3a1a18;
}
.tabs button {
  position: relative;
  flex: 1;
  display: flex;
  flex-direction: column;
  align-items: center;
  padding-top: 12px;
  font-size: 41px;
  line-height: 72px;
  color: #8f8da0;
}
.tabs button.active {
  color: #e8421f;
}
.tab-icon {
  position: relative;
}
.alert {
  position: absolute;
  top: -5px;
  right: -15px;
  width: 27px;
  height: 27px;
  background: #ef4444;
  border-radius: 50%;
}
.dot {
  position: absolute;
  bottom: 17px;
  width: 12px;
  height: 12px;
  background: #e8421f;
  border-radius: 50%;
}
</style>
